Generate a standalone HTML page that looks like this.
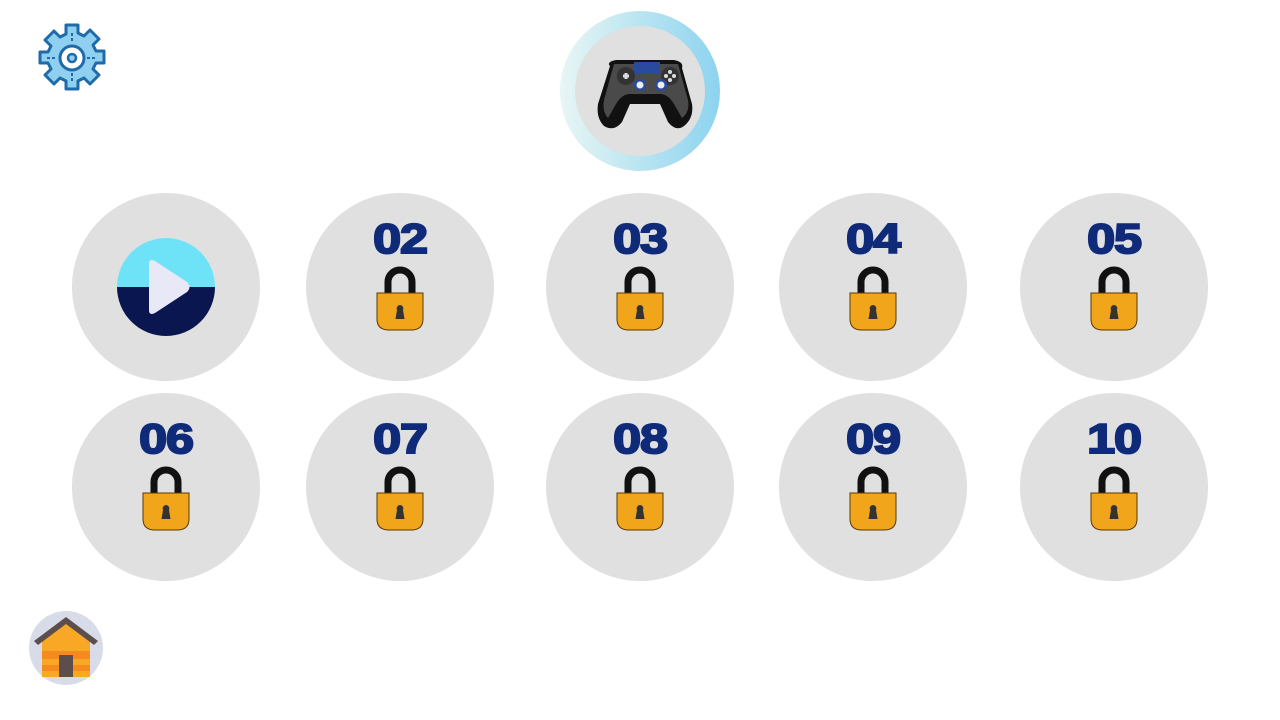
<!DOCTYPE html>
<html><head><style>
body{margin:0;width:1280px;height:720px;background:#fff;position:relative;overflow:hidden;font-family:"Liberation Sans",sans-serif}
.c{position:absolute;width:188px;height:188px;border-radius:50%;background:#e0e0e0}
.n{position:absolute;left:0;width:188px;top:22px;text-align:center;font-weight:bold;font-size:42px;color:#0f2a78;letter-spacing:-1px;transform:scaleX(1.2);line-height:48px;-webkit-text-stroke:2px #0f2a78}
.l{position:absolute;left:69px;top:72px}
</style></head><body>
<svg style="position:absolute;left:37px;top:23px" width="70" height="70" viewBox="0 0 70 70">
<path d="M29 2h12v8l6 3 6-6 9 9-6 6 3 6h8v12h-8l-3 6 6 6-9 9-6-6-6 3v8H29v-8l-6-3-6 6-9-9 6-6-3-6H3V29h8l3-6-6-6 9-9 6 6 6-3z" fill="#8fd0f0" stroke="#1f6aa8" stroke-width="3" stroke-linejoin="round"/>
<circle cx="35" cy="35" r="12" fill="#fff" stroke="#1f6aa8" stroke-width="3"/>
<circle cx="35" cy="35" r="4" fill="#8fd0f0" stroke="#1f6aa8" stroke-width="2.5"/>
<path d="M35 10v10M35 50v10M10 35h10M50 35h10" stroke="#1f6aa8" stroke-width="2" stroke-dasharray="3 2"/>
</svg>
<div style="position:absolute;left:560px;top:11px;width:160px;height:160px;border-radius:50%;background:linear-gradient(90deg,#e8f6f4,#8cd3ef)"></div>
<div style="position:absolute;left:575px;top:26px;width:130px;height:130px;border-radius:50%;background:#e0e0e0"></div>
<svg style="position:absolute;left:596px;top:56px" width="98" height="78" viewBox="0 0 98 78">
<path d="M14 10 Q10 6 20 4 H78 Q88 6 86 12 L96 48 Q98 62 88 70 Q80 76 72 66 L64 48 H34 L26 66 Q18 76 8 70 Q0 62 2 48 Z" fill="#111"/>
<path d="M18 8 H82 L92 44 Q94 56 86 62 L78 48 Q72 38 64 38 H34 Q26 38 20 48 L12 62 Q6 56 8 44 Z" fill="#4a4a4a"/>
<rect x="38" y="6" width="26" height="12" fill="#2a4aa0"/>
<circle cx="30" cy="20" r="9" fill="#333"/><circle cx="74" cy="20" r="9" fill="#333"/>
<path d="M27 20h6M30 17v6" stroke="#ddd" stroke-width="3"/>
<circle cx="74" cy="16" r="2" fill="#ddd"/><circle cx="74" cy="24" r="2" fill="#ddd"/><circle cx="70" cy="20" r="2" fill="#ddd"/><circle cx="78" cy="20" r="2" fill="#ddd"/>
<circle cx="44" cy="29" r="6" fill="#2a4aa0"/><circle cx="44" cy="29" r="3.5" fill="#eee"/>
<circle cx="65" cy="29" r="6" fill="#2a4aa0"/><circle cx="65" cy="29" r="3.5" fill="#eee"/>
</svg>

<div class="c" style="left:72px;top:193px">
<svg style="position:absolute;left:45px;top:45px" width="98" height="98" viewBox="0 0 98 98">
<clipPath id="cp"><circle cx="49" cy="49" r="49"/></clipPath>
<g clip-path="url(#cp)"><rect width="98" height="49" fill="#6ee3f8"/><rect y="49" width="98" height="49" fill="#0a1650"/></g>
<path d="M32 26 Q32 20 38 23 L70 44 Q75 49 70 54 L38 75 Q32 78 32 72 Z" fill="#e8e8f6"/>
</svg></div>

<svg width="0" height="0" style="position:absolute"><defs><g id="lk">
<path d="M13 30V17a12 12 0 0 1 24 0V30" fill="none" stroke="#111" stroke-width="7"/>
<path d="M2 28 H48 V54 Q48 65 36 65 H14 Q2 65 2 54 Z" fill="#f0a51a" stroke="#5a3a00" stroke-width="1"/>
<path d="M25 40 a3.5 3.5 0 0 1 3 5 l1.5 9 h-9 l1.5 -9 a3.5 3.5 0 0 1 3 -5z" fill="#333"/>
</g></defs></svg>

<div class="c" style="left:306px;top:193px"><div class="n">02</div><svg class="l" width="50" height="67"><use href="#lk"/></svg></div>
<div class="c" style="left:546px;top:193px"><div class="n">03</div><svg class="l" width="50" height="67"><use href="#lk"/></svg></div>
<div class="c" style="left:779px;top:193px"><div class="n">04</div><svg class="l" width="50" height="67"><use href="#lk"/></svg></div>
<div class="c" style="left:1020px;top:193px"><div class="n">05</div><svg class="l" width="50" height="67"><use href="#lk"/></svg></div>
<div class="c" style="left:72px;top:393px"><div class="n">06</div><svg class="l" width="50" height="67"><use href="#lk"/></svg></div>
<div class="c" style="left:306px;top:393px"><div class="n">07</div><svg class="l" width="50" height="67"><use href="#lk"/></svg></div>
<div class="c" style="left:546px;top:393px"><div class="n">08</div><svg class="l" width="50" height="67"><use href="#lk"/></svg></div>
<div class="c" style="left:779px;top:393px"><div class="n">09</div><svg class="l" width="50" height="67"><use href="#lk"/></svg></div>
<div class="c" style="left:1020px;top:393px"><div class="n">10</div><svg class="l" width="50" height="67"><use href="#lk"/></svg></div>

<svg style="position:absolute;left:28px;top:607px" width="76" height="82" viewBox="0 0 76 82">
<circle cx="38" cy="41" r="37" fill="#d8dce8"/>
<path d="M14 34 L38 16 L62 34 V70 H14 Z" fill="#f9a825"/>
<rect x="14" y="44" width="48" height="8" fill="#f58a1f"/><rect x="14" y="58" width="48" height="6" fill="#f58a1f"/>
<path d="M6 34 L38 10 L70 34 L66 38 L38 17 L10 38 Z" fill="#5d4e4e"/>
<rect x="31" y="48" width="14" height="22" fill="#5d4e4e"/>
</svg>
</body></html>
